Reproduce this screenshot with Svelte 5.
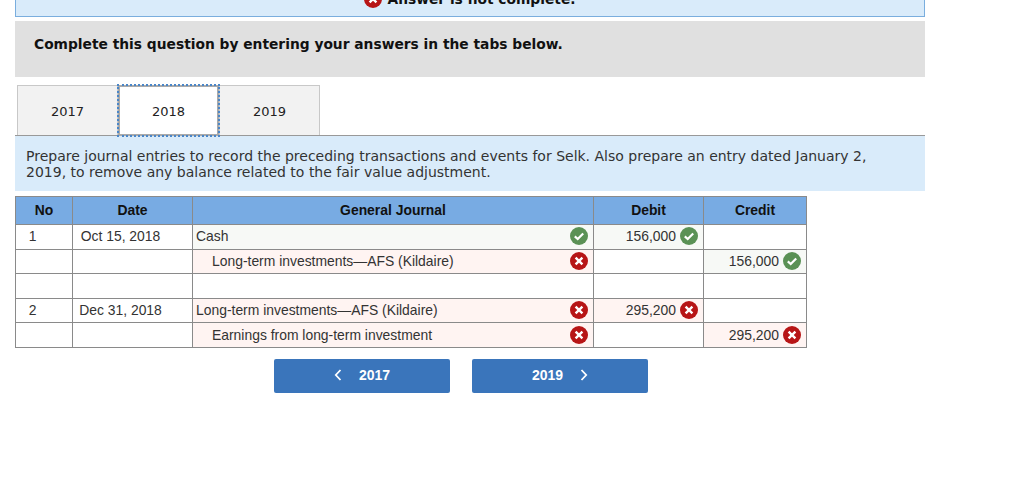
<script lang="ts">
const tabs = ["2017", "2018", "2019"];

type Mark = "ok" | "bad" | null;
type Row = {
  no: string;
  date: string;
  account: string;
  indent?: boolean;
  accountMark: Mark;
  debit?: string;
  debitMark?: Mark;
  credit?: string;
  creditMark?: Mark;
};

const rows: Row[] = [
  { no: "1", date: "Oct 15, 2018", account: "Cash", accountMark: "ok", debit: "156,000", debitMark: "ok" },
  { no: "", date: "", account: "Long-term investments—AFS (Kildaire)", indent: true, accountMark: "bad", credit: "156,000", creditMark: "ok" },
  { no: "", date: "", account: "", accountMark: null },
  { no: "2", date: "Dec 31, 2018", account: "Long-term investments—AFS (Kildaire)", accountMark: "bad", debit: "295,200", debitMark: "bad" },
  { no: "", date: "", account: "Earnings from long-term investment", indent: true, accountMark: "bad", credit: "295,200", creditMark: "bad" },
];
</script>

{#snippet mark(kind: Mark)}
  {#if kind === "ok"}
    <svg class="mark" viewBox="0 0 18 18" aria-label="correct">
      <circle cx="9" cy="9" r="9" fill="#5a9155" />
      <path d="M4.8 9.4 7.7 12 13.2 6.4" fill="none" stroke="#fff" stroke-width="2.2" />
    </svg>
  {:else if kind === "bad"}
    <svg class="mark" viewBox="0 0 18 18" aria-label="incorrect">
      <circle cx="9" cy="9" r="9" fill="#b71516" />
      <path d="M5.6 5.6 12.4 12.4M12.4 5.6 5.6 12.4" fill="none" stroke="#fff" stroke-width="2.4" />
    </svg>
  {/if}
{/snippet}

<div class="page">
  <div class="banner">
    <div class="banner-msg">
      <svg class="mark" viewBox="0 0 18 18">
        <circle cx="9" cy="9" r="9" fill="#b71516" />
        <path d="M5.6 5.6 12.4 12.4M12.4 5.6 5.6 12.4" fill="none" stroke="#fff" stroke-width="2.4" />
      </svg>
      <span>Answer is not complete.</span>
    </div>
  </div>

  <div class="instruction">Complete this question by entering your answers in the tabs below.</div>

  <div class="tabs">
    {#each tabs as tab}
      <div class="tab" class:active={tab === "2018"}>{tab}</div>
    {/each}
  </div>

  <div class="prompt">
    Prepare journal entries to record the preceding transactions and events for Selk. Also prepare an entry dated January 2, 2019, to remove any balance related to the fair value adjustment.
  </div>

  <table>
    <colgroup>
      <col style="width: 57px" />
      <col style="width: 120px" />
      <col style="width: 401px" />
      <col style="width: 110px" />
      <col style="width: 103px" />
    </colgroup>
    <thead>
      <tr>
        <th>No</th>
        <th>Date</th>
        <th>General Journal</th>
        <th>Debit</th>
        <th>Credit</th>
      </tr>
    </thead>
    <tbody>
      {#each rows as row}
        <tr>
          <td class="no">{row.no}</td>
          <td class="date">{row.date}</td>
          <td class:ok={row.accountMark === "ok"} class:bad={row.accountMark === "bad"}>
            <div class="account" class:indent={row.indent}>
              <span>{row.account}</span>
              {@render mark(row.accountMark)}
            </div>
          </td>
          <td class:ok={row.debitMark === "ok"} class:bad={row.debitMark === "bad"}>
            {#if row.debit}
              <div class="amount">{row.debit}{@render mark(row.debitMark ?? null)}</div>
            {/if}
          </td>
          <td class:ok={row.creditMark === "ok"} class:bad={row.creditMark === "bad"}>
            {#if row.credit}
              <div class="amount">{row.credit}{@render mark(row.creditMark ?? null)}</div>
            {/if}
          </td>
        </tr>
      {/each}
    </tbody>
  </table>

  <div class="nav">
    <button class="nav-btn">
      <svg class="chev" viewBox="0 0 8 12"><path d="M6.5 1 1.8 6l4.7 5" fill="none" stroke="#fff" stroke-width="1.8" /></svg>
      2017
    </button>
    <button class="nav-btn">
      2019
      <svg class="chev" viewBox="0 0 8 12"><path d="M1.5 1 6.2 6l-4.7 5" fill="none" stroke="#fff" stroke-width="1.8" /></svg>
    </button>
  </div>
</div>

<style>
  :global(body) {
    background: #fff;
  }

  .page {
    width: 1024px;
    height: 487px;
    overflow: hidden;
    box-sizing: border-box;
    padding-left: 15px;
    font-family: "DejaVu Sans", Verdana, sans-serif;
    color: #222;
  }

  .banner {
    width: 910px;
    height: 17px;
    box-sizing: border-box;
    background: #d9ebfa;
    border: 1px solid #7aaede;
    border-top: 0;
    overflow: hidden;
    display: flex;
    justify-content: center;
  }

  .banner-msg {
    display: flex;
    align-items: center;
    gap: 5px;
    height: 18px;
    margin-top: -10px;
    font-size: 13.8px;
    font-weight: 700;
    color: #111;
  }

  .instruction {
    width: 910px;
    height: 56px;
    margin-top: 4px;
    box-sizing: border-box;
    padding: 15px 0 0 19px;
    background: #e0e0e0;
    font-size: 13.8px;
    line-height: 17px;
    font-weight: 700;
    color: #111;
  }

  .tabs {
    display: flex;
    width: 910px;
    height: 50px;
    margin-top: 8px;
    padding-left: 2px;
    box-sizing: border-box;
  }

  .tab {
    width: 101px;
    box-sizing: border-box;
    display: flex;
    align-items: center;
    justify-content: center;
    background: #f2f2f2;
    border: 1px solid #c8c8c8;
    border-bottom: 0;
    font-size: 13px;
    padding-top: 2px;
  }

  .tab.active {
    position: relative;
    height: 51px;
    background: #fff;
    border: 0;
    outline: 2px dotted #4a86c8;
    outline-offset: -1px;
    box-shadow: inset 0 0 0 2px #aaa;
  }

  .prompt {
    width: 910px;
    height: 56px;
    box-sizing: border-box;
    border-top: 1px solid #999;
    background: #d9ebfa;
    padding: 12px 40px 0 11px;
    font-size: 14px;
    line-height: 16px;
    color: #333;
  }

  table {
    width: 791px;
    margin-top: 5px;
    table-layout: fixed;
    border-collapse: collapse;
    font-family: "Liberation Sans", Arial, sans-serif;
    font-size: 13.9px;
    color: #333;
  }

  th,
  td {
    border: 1px solid #8a8a8a;
    padding: 0;
    box-sizing: border-box;
  }

  th {
    height: 28px;
    padding-bottom: 2px;
    background: #78abe3;
    color: #111;
    font-weight: 700;
    text-align: center;
  }

  td {
    height: 24.6px;
    padding-bottom: 1px;
    background: #fff;
  }

  td.ok {
    background: #f7f9f6;
  }

  td.bad {
    background: #fff4f2;
  }

  .no {
    padding-right: 23px;
    text-align: center;
  }

  .date {
    padding-right: 24px;
    text-align: center;
  }

  .account {
    display: flex;
    align-items: center;
    justify-content: space-between;
    padding: 0 5px 0 3px;
  }

  .account.indent {
    padding-left: 19px;
  }

  .amount {
    display: flex;
    align-items: center;
    justify-content: flex-end;
    gap: 4px;
    padding-right: 5px;
  }

  .mark {
    width: 18px;
    height: 18px;
    flex: none;
  }

  .nav {
    display: flex;
    justify-content: center;
    gap: 22px;
    width: 892px;
    margin-top: 11px;
  }

  .nav-btn {
    width: 176px;
    height: 34px;
    display: flex;
    align-items: center;
    justify-content: center;
    gap: 17px;
    border: 0;
    border-radius: 2px;
    padding: 0 0 2px;
    background: #3a75bb;
    color: #fff;
    font-family: "Liberation Sans", Arial, sans-serif;
    font-size: 14px;
    font-weight: 700;
  }

  .chev {
    width: 8px;
    height: 12px;
  }
</style>
